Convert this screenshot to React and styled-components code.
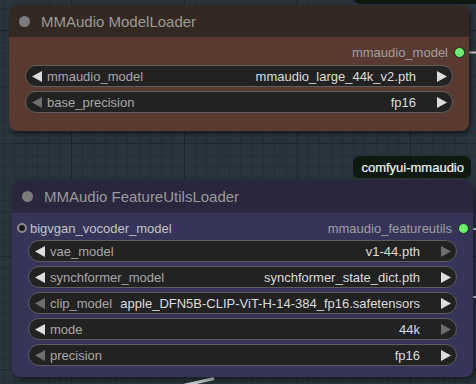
import React from 'react';
import styled, { createGlobalStyle } from 'styled-components';

const GlobalStyle = createGlobalStyle`
  html, body {
    margin: 0;
    padding: 0;
    background: #28353c;
    font-family: 'Liberation Sans', Arial, sans-serif;
  }
`;

const nodes = [
  {
    id: 'loader',
    title: 'MMAudio ModelLoader',
    left: 9,
    top: 5,
    width: 460,
    height: 126,
    titleHeight: 32,
    titleColor: '#332922',
    bodyColor: '#593930',
    slotGap: 3,
    output: 'mmaudio_model',
    widgets: [
      { label: 'mmaudio_model', value: 'mmaudio_large_44k_v2.pth', prev: true, next: true },
      { label: 'base_precision', value: 'fp16', prev: false, next: true },
    ],
  },
  {
    id: 'features',
    title: 'MMAudio FeatureUtilsLoader',
    left: 12,
    top: 180,
    width: 461,
    height: 197,
    titleHeight: 33,
    titleColor: '#29263d',
    bodyColor: '#363459',
    slotGap: 2,
    input: 'bigvgan_vocoder_model',
    output: 'mmaudio_featureutils',
    badge: 'comfyui-mmaudio',
    widgets: [
      { label: 'vae_model', value: 'v1-44.pth', prev: true, next: false },
      { label: 'synchformer_model', value: 'synchformer_state_dict.pth', prev: true, next: true },
      { label: 'clip_model', value: 'apple_DFN5B-CLIP-ViT-H-14-384_fp16.safetensors', prev: false, next: true },
      { label: 'mode', value: '44k', prev: true, next: false },
      { label: 'precision', value: 'fp16', prev: false, next: true },
    ],
  },
];

const Arrow = ({ dir, enabled }) => (
  <ArrowIcon viewBox="0 0 10 11" $enabled={enabled}>
    {dir === 'left'
      ? <polygon points="10,0 10,11 0,5.5" />
      : <polygon points="0,0 0,11 10,5.5" />}
  </ArrowIcon>
);

const App = () => (
  <>
    <GlobalStyle />
    <Canvas>
      <TopBadge />
      <Wires viewBox="0 0 476 384">
        <line x1="469" y1="52.5" x2="476" y2="52.5" />
        <line x1="471" y1="229" x2="476" y2="229" />
        <line x1="473" y1="297" x2="476" y2="297" />
        <path d="M181 386 L214 378.5" strokeWidth="3" />
      </Wires>
      {nodes.map((node) => (
        <Node
          key={node.id}
          style={{ left: node.left, top: node.top, width: node.width, height: node.height }}
          $body={node.bodyColor}
        >
          {node.badge && <Badge>{node.badge}</Badge>}
          <NodeTitle $height={node.titleHeight} $color={node.titleColor}>
            <TitleDot />
            <TitleText>{node.title}</TitleText>
          </NodeTitle>
          <NodeBody>
            <SlotRow $gap={node.slotGap}>
              {node.input && (
                <InputSlot>
                  <InputDot />
                  <SlotLabel $input>{node.input}</SlotLabel>
                </InputSlot>
              )}
              <OutputSlot>
                <SlotLabel>{node.output}</SlotLabel>
                <OutputDot />
              </OutputSlot>
            </SlotRow>
            <WidgetList>
              {node.widgets.map((w) => (
                <Widget key={w.label}>
                  <Arrow dir="left" enabled={w.prev} />
                  <WidgetLabel>{w.label}</WidgetLabel>
                  <WidgetValue>{w.value}</WidgetValue>
                  <Arrow dir="right" enabled={w.next} />
                </Widget>
              ))}
            </WidgetList>
          </NodeBody>
        </Node>
      ))}
    </Canvas>
  </>
);

export default App;

const Canvas = styled.div`
  position: relative;
  width: 476px;
  height: 384px;
  overflow: hidden;
  background-color: #28353c;
  background-image:
    linear-gradient(to right, rgba(20, 30, 36, 0.5) 1px, transparent 1px),
    linear-gradient(to bottom, rgba(20, 30, 36, 0.5) 1px, transparent 1px),
    linear-gradient(to right, rgba(20, 30, 36, 0.28) 1px, transparent 1px),
    linear-gradient(to bottom, rgba(20, 30, 36, 0.28) 1px, transparent 1px);
  background-size: 113px 113px, 113px 113px, 11.3px 11.3px, 11.3px 11.3px;
  background-position: 71px 30px, 71px 30px, 3px 8px, 3px 8px;
`;

const Wires = styled.svg`
  position: absolute;
  inset: 0;
  width: 476px;
  height: 384px;
  stroke: #c8cfcf;
  stroke-width: 2;
  fill: none;
`;

const TopBadge = styled.div`
  position: absolute;
  left: 354px;
  top: -18px;
  width: 130px;
  height: 22px;
  border-radius: 6px;
  background: #0e1a0f;
`;

const Node = styled.div`
  position: absolute;
  display: flex;
  flex-direction: column;
  border-radius: 8px;
  background: ${({ $body }) => $body};
  box-shadow: 2px 3px 5px rgba(0, 0, 0, 0.45);
`;

const Badge = styled.div`
  position: absolute;
  right: 2px;
  top: -24px;
  height: 22px;
  padding: 0 7px 0 8px;
  display: flex;
  align-items: center;
  border-radius: 6px;
  background: #0e1a0f;
  color: #f4f4f4;
  font-size: 13px;
  -webkit-text-stroke: 0.2px #f4f4f4;
`;

const NodeTitle = styled.div`
  flex-shrink: 0;
  height: ${({ $height }) => $height}px;
  display: flex;
  align-items: center;
  gap: 11px;
  padding-left: 10px;
  border-radius: 8px 8px 0 0;
  background: ${({ $color }) => $color};
`;

const TitleDot = styled.span`
  flex-shrink: 0;
  width: 11px;
  height: 11px;
  border-radius: 50%;
  background: #7c7c7c;
`;

const TitleText = styled.span`
  font-size: 15px;
  color: #9a9a9a;
`;

const NodeBody = styled.div`
  padding: 5px 16px 0;
`;

const SlotRow = styled.div`
  height: 20px;
  display: flex;
  align-items: center;
  margin: 0 -12px ${({ $gap }) => $gap}px -11px;
`;

const InputSlot = styled.div`
  display: flex;
  align-items: center;
  gap: 3px;
`;

const OutputSlot = styled.div`
  margin-left: auto;
  display: flex;
  align-items: center;
  gap: 6px;
`;

const SlotLabel = styled.span`
  font-size: 13px;
  color: ${({ $input }) => ($input ? '#c4c4c4' : '#a0a0a0')};
`;

const InputDot = styled.span`
  flex-shrink: 0;
  box-sizing: border-box;
  width: 10px;
  height: 10px;
  border-radius: 50%;
  border: 2px solid #8a8a8a;
  background: #1b1b1b;
`;

const OutputDot = styled.span`
  flex-shrink: 0;
  box-sizing: border-box;
  width: 11px;
  height: 11px;
  border-radius: 50%;
  background: #6bf06b;
  border: 1.5px solid #1d2a1d;
`;

const WidgetList = styled.div`
  display: flex;
  flex-direction: column;
  gap: 4px;
`;

const Widget = styled.div`
  box-sizing: border-box;
  height: 22px;
  display: flex;
  align-items: center;
  padding: 0 5px 0 6px;
  border: 1px solid #5e5e5e;
  border-radius: 11px;
  background: #222;
  font-size: 13px;
`;

const ArrowIcon = styled.svg`
  flex-shrink: 0;
  width: 10px;
  height: 11px;
  fill: ${({ $enabled }) => ($enabled ? '#dddddd' : '#6e6e6e')};
`;

const WidgetLabel = styled.span`
  flex-shrink: 0;
  margin-left: 5px;
  color: #a8a8a8;
`;

const WidgetValue = styled.span`
  flex: 1;
  min-width: 0;
  margin: 0 21px 0 8px;
  text-align: right;
  color: #dddddd;
  white-space: nowrap;
  overflow: hidden;
  text-overflow: ellipsis;
`;
